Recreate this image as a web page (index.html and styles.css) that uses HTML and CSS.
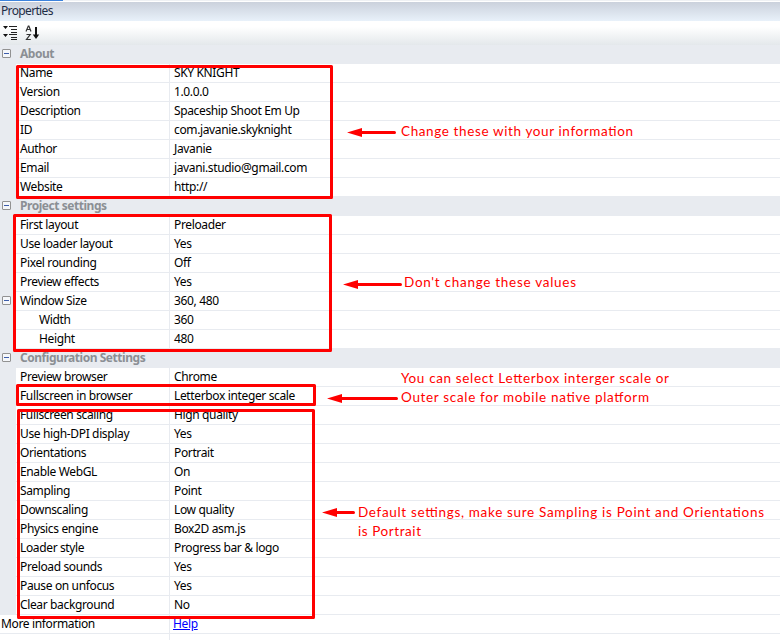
FILE: index.html
```
<!DOCTYPE html>
<html lang="en">
<head>
<meta charset="utf-8">
<title>Properties</title>
<link rel="stylesheet" href="styles.css">
</head>
<body>
<main class="panel">
  <div class="tabstrip"><span class="tab"></span></div>
  <header class="title">Properties</header>
  <div class="toolbar">
    <svg class="tool" width="16" height="16" viewBox="0 0 16 16"><path d="M0 1h5L2.500 4zM0 9h5L2.500 12z" fill="#111"/><path d="M6 1.500h8M8 4.500h6M8 7.500h6M6 9.500h8M8 12.500h6M8 14.500h6" stroke="#222"/></svg>
    <svg class="tool" width="16" height="16" viewBox="0 0 16 16"><path d="M2 6.500L4.300 1h.6L7 6.500M3 4.500h3M2.500 9.500h3.700L2.500 14.500h4.300" fill="none" stroke="#333" stroke-width="1.200"/><path d="M12 2v10" stroke="#111" stroke-width="2"/><path d="M8.800 9.500H15.200L12 14z" fill="#111"/></svg>
  </div>
  <section class="grid">
    <h2 class="group"><i class="toggle"></i>About</h2>
    <div class="row"><span class="key">Name</span><span class="val">SKY KNIGHT</span></div>
    <div class="row"><span class="key">Version</span><span class="val">1.0.0.0</span></div>
    <div class="row"><span class="key">Description</span><span class="val">Spaceship Shoot Em Up</span></div>
    <div class="row"><span class="key">ID</span><span class="val">com.javanie.skyknight</span></div>
    <div class="row"><span class="key">Author</span><span class="val">Javanie</span></div>
    <div class="row"><span class="key">Email</span><span class="val">javani.studio@gmail.com</span></div>
    <div class="row"><span class="key">Website</span><span class="val">http://</span></div>
    <h2 class="group"><i class="toggle"></i>Project settings</h2>
    <div class="row"><span class="key">First layout</span><span class="val">Preloader</span></div>
    <div class="row"><span class="key">Use loader layout</span><span class="val">Yes</span></div>
    <div class="row"><span class="key">Pixel rounding</span><span class="val">Off</span></div>
    <div class="row"><span class="key">Preview effects</span><span class="val">Yes</span></div>
    <div class="row"><i class="toggle"></i><span class="key">Window Size</span><span class="val">360, 480</span></div>
    <div class="row"><span class="key sub">Width</span><span class="val">360</span></div>
    <div class="row"><span class="key sub">Height</span><span class="val">480</span></div>
    <h2 class="group"><i class="toggle"></i>Configuration Settings</h2>
    <div class="row"><span class="key">Preview browser</span><span class="val">Chrome</span></div>
    <div class="row"><span class="key">Fullscreen in browser</span><span class="val">Letterbox integer scale</span></div>
    <div class="row"><span class="key">Fullscreen scaling</span><span class="val">High quality</span></div>
    <div class="row"><span class="key">Use high-DPI display</span><span class="val">Yes</span></div>
    <div class="row"><span class="key">Orientations</span><span class="val">Portrait</span></div>
    <div class="row"><span class="key">Enable WebGL</span><span class="val">On</span></div>
    <div class="row"><span class="key">Sampling</span><span class="val">Point</span></div>
    <div class="row"><span class="key">Downscaling</span><span class="val">Low quality</span></div>
    <div class="row"><span class="key">Physics engine</span><span class="val">Box2D asm.js</span></div>
    <div class="row"><span class="key">Loader style</span><span class="val">Progress bar &amp; logo</span></div>
    <div class="row"><span class="key">Preload sounds</span><span class="val">Yes</span></div>
    <div class="row"><span class="key">Pause on unfocus</span><span class="val">Yes</span></div>
    <div class="row"><span class="key">Clear background</span><span class="val">No</span></div>
    <div class="row info"><span class="key">More information</span><span class="val"><a class="help" href="#">Help</a></span></div>
    <div class="row info"><span class="key"></span><span class="val"></span></div>
  </section>
  <svg class="marks" width="780" height="640" viewBox="0 0 780 640">
    <g fill="none" stroke="#f00" stroke-width="3" stroke-linejoin="round">
      <rect x="17.500" y="66.500" width="314" height="131"/>
      <rect x="14.500" y="215.500" width="316" height="135"/>
      <rect x="17.500" y="385.500" width="297" height="19"/>
      <rect x="18.500" y="410.500" width="295" height="207"/>
    </g>
    <g stroke="#f00" stroke-width="3" stroke-linecap="round">
      <path d="M360 132.500h34.500M356 284.500h44.500M340 398.500h56.500M335 512.500h18.500"/>
    </g>
    <path fill="#f00" d="M347 132.500l15-4.500v9zM343 284.500l15-4.500v9zM327 398.500l15-4.500v9zM322 512.500l15-4.500v9z"/>
    <g class="note">
      <text x="401" y="136" textLength="232">Change these with your information</text>
      <text x="404" y="287" textLength="172">Don't change these values</text>
      <text x="401" y="383" textLength="268">You can select Letterbox interger scale or</text>
      <text x="401" y="402" textLength="248">Outer scale for mobile native platform</text>
      <text x="358" y="517" textLength="406">Default settings, make sure Sampling is Point and Orientations</text>
      <text x="358" y="536" textLength="63">is Portrait</text>
    </g>
  </svg>
</main>
</body>
</html>
```
FILE: styles.css
```
* { box-sizing: border-box; }
body { margin: 0; background: #fff; color: #000; font: 12px/18px "Noto Sans", "Open Sans", sans-serif; letter-spacing: -0.36px; }
.panel { position: relative; width: 780px; height: 640px; overflow: hidden; }
.tabstrip { height: 2px; background: linear-gradient(#eff1f4 50%, #fff 50%); }
.tab { display: block; width: 63px; height: 1px; background: #3c82dc; }
.title { height: 19px; padding-left: 1px; color: #1e2d46; letter-spacing: -0.65px; background: linear-gradient(#cbd1dc, #e8f1fa); }
.toolbar { display: flex; gap: 5px; height: 24px; padding: 4px 3px; background: linear-gradient(#fff 25%, #e4e8eb); }
.tool { display: block; }
.grid { background: linear-gradient(90deg, #e8ebf0 16px, #fff 16px); }
.group { position: relative; height: 19px; margin: 0; padding-left: 20px; font-size: 12px; font-weight: 700; letter-spacing: -0.46px; color: #8b8f94; background: #e8ebf0; }
.row { display: flex; position: relative; height: 19px; padding-left: 16px; }
.key { width: 154px; height: 19px; padding-left: 4px; border-right: 1px solid #e8ebf0; border-bottom: 1px solid #e8ebf0; }
.sub { padding-left: 23px; }
.val { flex: 1; height: 19px; padding-left: 4px; border-bottom: 1px solid #e8ebf0; }
.toggle { position: absolute; left: 2px; top: 4px; width: 9px; height: 9px; border: 1px solid #929292; border-radius: 1px; background: linear-gradient(#3d5dab, #3d5dab) center / 5px 1px no-repeat #f5f7fa; }
.info { padding-left: 0; background: #fff; }
.info .key { width: 170px; padding-left: 1px; }
.info .val { padding-left: 3px; }
.help { color: #00f; text-decoration: underline; }
.marks { position: absolute; left: 0; top: 0; }
.note { fill: #f00; font: 13.5px Lato, "Open Sans", sans-serif; letter-spacing: 0; }
```
